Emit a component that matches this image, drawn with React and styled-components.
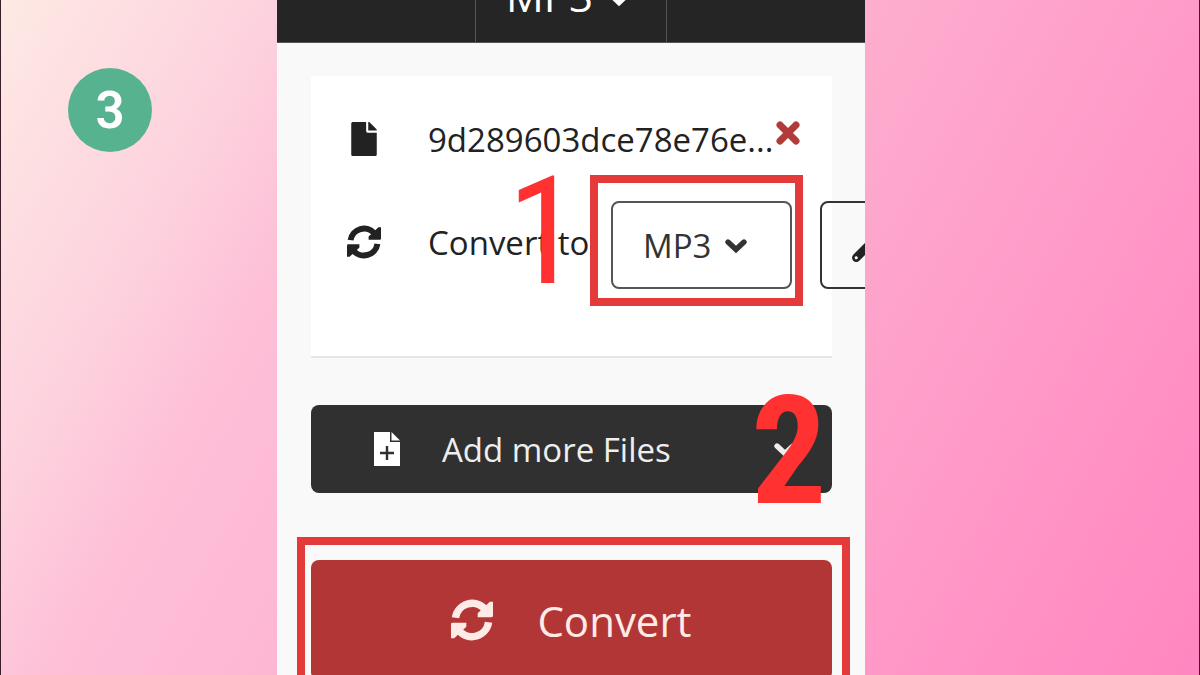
import React, { useState } from "react";
import styled, { createGlobalStyle } from "styled-components";
import { FaFile, FaWrench } from "react-icons/fa";

const GlobalStyle = createGlobalStyle`
  * {
    box-sizing: border-box;
  }
  body {
    margin: 0;
    font-family: "Open Sans", "Noto Sans", sans-serif;
  }
  button,
  select {
    font-family: inherit;
    cursor: pointer;
  }
`;

const Page = styled.div`
  display: grid;
  grid-template-columns: 276fr 588fr 334fr;
  height: 100vh;
  overflow: hidden;
  border: solid #3a1f2b;
  border-width: 0 1px;
  background: linear-gradient(
    119deg,
    #fdeae4 0%,
    #fddce1 10%,
    #fdd1de 18%,
    #febfd7 27%,
    #fdafcf 54%,
    #ff9bc8 76%,
    #ff86c0 100%
  );
`;

const Side = styled.aside`
  padding: 68px 67px;
`;

const StepBadge = styled.div`
  display: flex;
  align-items: center;
  justify-content: center;
  width: 84px;
  height: 84px;
  border-radius: 50%;
  background-color: #57b38f;
  color: #fff;
  font: 600 51px Roboto, sans-serif;
`;

const Phone = styled.main`
  overflow: hidden;
  background-color: #f9f9f9;
`;

const TopBar = styled.header`
  display: grid;
  grid-template-columns: 1fr 192px 1fr;
  align-content: end;
  height: 43px;
  overflow: hidden;
  background-color: #252525;
  border-bottom: 1px solid #555;
`;

const TopCell = styled.div`
  height: 91px;
  border: solid #555;
  border-width: 0 1px;
`;

const SelectBox = styled.label`
  position: relative;
  display: block;
  flex: none;
  width: ${(props) => (props.$bar ? "100%" : "181px")};
  height: 88px;
  color: ${(props) => (props.$bar ? "#fff" : "#333")};

  select {
    appearance: none;
    width: 100%;
    height: 100%;
    padding: 0 0 0 30px;
    border: ${(props) => (props.$bar ? "0" : "2px solid #555")};
    border-radius: 8px;
    background: transparent;
    color: inherit;
    font-size: ${(props) => (props.$bar ? "42px" : "33px")};
  }
  svg {
    position: absolute;
    top: 50%;
    right: ${(props) => (props.$bar ? "32px" : "45px")};
    transform: translateY(-50%);
    pointer-events: none;
  }
`;

const Content = styled.div`
  display: flex;
  flex-direction: column;
  padding: 33px 33px 0 34px;
`;

const Card = styled.section`
  height: 282px;
  padding: 32px 30px 0 36px;
  background-color: #fff;
  border-bottom: 2px solid #e6e6e6;
`;

const Row = styled.div`
  display: grid;
  grid-template-columns: 34px auto auto 1fr;
  align-items: center;
  height: ${(props) => props.$height};
  color: #222;
  font-size: 33px;
  white-space: nowrap;

  > svg {
    justify-self: center;
  }
`;

const RowText = styled.span`
  padding-left: 47px;
`;

const ConvertText = styled(RowText)`
  width: 230px;
`;

const RemoveButton = styled.button`
  display: flex;
  padding: 0 0 12px 3px;
  border: 0;
  background: none;
  color: #b33a3a;
`;

const Controls = styled.div`
  display: flex;
  gap: 28px;
  width: 0;
  padding-top: 6px;
`;

const SettingsButton = styled.button`
  display: flex;
  flex: none;
  align-items: center;
  width: 98px;
  height: 88px;
  padding: 0 30px;
  border: 2px solid #333;
  border-radius: 8px;
  background: transparent;
  color: #222;
`;

// red marker frame drawn around a control
const Frame = styled.div`
  position: absolute;
  inset: ${(props) => props.$inset};
  border: 8px solid #e53a3a;
  pointer-events: none;
`;

const Marked = styled.div`
  position: relative;
  flex: none;
`;

const MarkNumber = styled.span`
  position: absolute;
  top: ${(props) => props.$top};
  left: ${(props) => props.$left};
  color: #ff3131;
  font-family: "Roboto Condensed", "Liberation Sans Narrow", Roboto, sans-serif;
  font-weight: ${(props) => props.$weight};
  font-size: 150px;
  line-height: 150px;
  pointer-events: none;
`;

const AddButton = styled.button`
  display: grid;
  grid-template-columns: 26px 1fr 22px;
  align-items: center;
  gap: 42px;
  width: 100%;
  height: 88px;
  padding: 0 36px 0 63px;
  border: 0;
  border-radius: 8px;
  background-color: #303030;
  color: #eee;
  font-size: 33px;
  text-align: left;
`;

const AddArea = styled(Marked)`
  margin-top: 47px;
`;

const ConvertArea = styled(Marked)`
  margin-top: 67px;
`;

const ConvertButton = styled.button`
  display: flex;
  align-items: center;
  justify-content: center;
  gap: 44px;
  width: 100%;
  height: 120px;
  border: 0;
  border-radius: 8px;
  background-color: #b33636;
  color: #ffebe6;
  font-size: 42px;
`;

function ChevronIcon({ size }) {
  return (
    <svg width={size} height={size} viewBox="0 0 22 22" aria-hidden="true">
      <path
        d="M3 8L11 15.5L19 8"
        fill="none"
        stroke="currentColor"
        strokeWidth="5.4"
        strokeLinecap="round"
      />
    </svg>
  );
}

function CrossIcon() {
  return (
    <svg width="24" height="24" viewBox="0 0 24 24" aria-hidden="true">
      <path
        d="M4 4L20 20M20 4L4 20"
        stroke="currentColor"
        strokeWidth="7"
        strokeLinecap="round"
      />
    </svg>
  );
}

function RefreshIcon({ size }) {
  return (
    <svg width={size} height={size} viewBox="0 0 34 34" aria-hidden="true">
      <g fill="none" stroke="currentColor" strokeWidth="6">
        <path d="M3.6 15.2A13.6 13.6 0 0 1 27.5 8.4" />
        <path d="M30.4 18.8A13.6 13.6 0 0 1 6.5 25.6" />
      </g>
      <g fill="currentColor">
        <path d="M34 2.2V13.6Q34 14.8 32.8 14.8H21.6V11.6L31.4 2.2Z" />
        <path d="M0 31.8V20.4Q0 19.2 1.2 19.2H12.4V22.4L2.6 31.8Z" />
      </g>
    </svg>
  );
}

function FilePlusIcon() {
  return (
    <svg width="26" height="34" viewBox="0 0 26 34" aria-hidden="true">
      <path d="M0 0H16V10H26V34H0Z" fill="#fff" />
      <path d="M17.5 0L26 8.5H17.5Z" fill="#fff" />
      <path d="M13 14V28M6 21H20" stroke="#303030" strokeWidth="2.4" />
    </svg>
  );
}

function FormatSelect({ bar, value, onChange }) {
  return (
    <SelectBox $bar={bar}>
      <select
        aria-label="Format"
        value={value}
        onChange={(e) => onChange(e.target.value)}
      >
        <option>MP3</option>
        <option>WAV</option>
        <option>OGG</option>
      </select>
      <ChevronIcon size={bar ? 30 : 22} />
    </SelectBox>
  );
}

function App() {
  const [format, setFormat] = useState("MP3");

  return (
    <>
      <GlobalStyle />
      <Page>
        <Side>
          <StepBadge>3</StepBadge>
        </Side>
        <Phone>
          <TopBar>
            <span />
            <TopCell>
              <FormatSelect bar value={format} onChange={setFormat} />
            </TopCell>
            <span />
          </TopBar>
          <Content>
            <Card>
              <Row $height="62px">
                <FaFile size={34} />
                <RowText>9d289603dce78e76e...</RowText>
                <RemoveButton aria-label="Remove file">
                  <CrossIcon />
                </RemoveButton>
              </Row>
              <Row $height="144px">
                <RefreshIcon size={34} />
                <ConvertText>Convert to</ConvertText>
                <Controls>
                  <Marked>
                    <FormatSelect value={format} onChange={setFormat} />
                    <Frame $inset="-26px -11px -17px -21px" />
                    <MarkNumber $top="-44px" $left="-104px" $weight={400}>
                      1
                    </MarkNumber>
                  </Marked>
                  <SettingsButton aria-label="Settings">
                    <FaWrench size={34} />
                  </SettingsButton>
                </Controls>
              </Row>
            </Card>
            <AddArea>
              <AddButton>
                <FilePlusIcon />
                Add more Files
                <ChevronIcon size={22} />
              </AddButton>
              <MarkNumber $top="-28px" $left="440px" $weight={700}>
                2
              </MarkNumber>
            </AddArea>
            <ConvertArea>
              <ConvertButton>
                <RefreshIcon size={42} />
                Convert
              </ConvertButton>
              <Frame $inset="-23px -18px -23px -14px" />
            </ConvertArea>
          </Content>
        </Phone>
      </Page>
    </>
  );
}

export default App;
